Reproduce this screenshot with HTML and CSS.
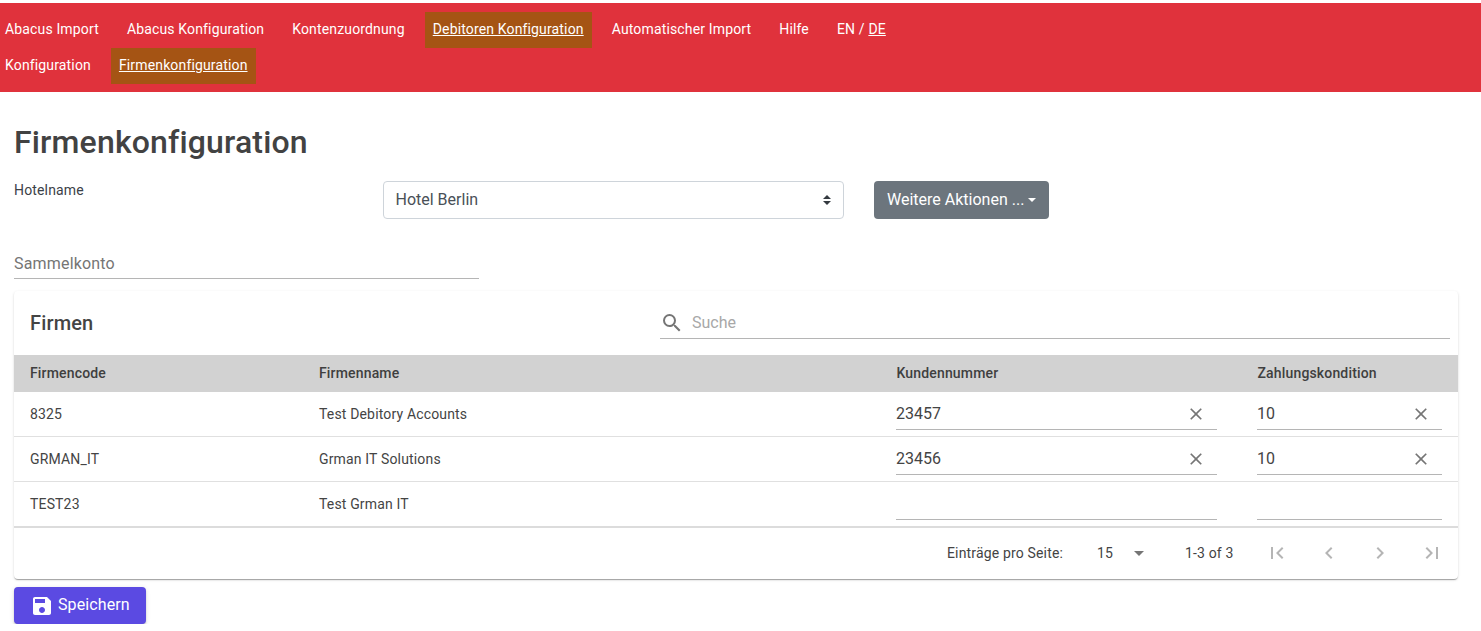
FILE: index.html
```html
<!DOCTYPE html>
<html lang="de">
<head>
<meta charset="utf-8">
<title>Firmenkonfiguration</title>
<link rel="stylesheet" href="styles.css">
</head>
<body>
<nav class="nav">
  <div class="nav-row">
    <a class="nav-link">Abacus Import</a>
    <a class="nav-link">Abacus Konfiguration</a>
    <a class="nav-link">Kontenzuordnung</a>
    <a class="nav-link active">Debitoren Konfiguration</a>
    <a class="nav-link">Automatischer Import</a>
    <a class="nav-link">Hilfe</a>
    <span class="nav-link">EN / <u>DE</u></span>
  </div>
  <div class="nav-row">
    <a class="nav-link">Konfiguration</a>
    <a class="nav-link active">Firmenkonfiguration</a>
  </div>
</nav>
<main class="main">
  <h1 class="title">Firmenkonfiguration</h1>
  <div class="form-row">
    <label class="form-label">Hotelname</label>
    <div class="select">
      <span>Hotel Berlin</span>
      <svg class="select-arrows" viewBox="0 0 8 10" width="8" height="10"><path d="M4 0 8 4H0zM4 10 0 6h8z"/></svg>
    </div>
    <button class="dropdown-btn"><span class="btn-text">Weitere Aktionen ...</span><i class="caret"></i></button>
  </div>
  <div class="account-field">Sammelkonto</div>
  <section class="card">
    <div class="card-head">
      <h2 class="card-title">Firmen</h2>
      <div class="search">
        <svg class="search-icon" viewBox="0 0 24 24" width="24" height="24"><path d="M15.5 14h-.79l-.28-.27A6.471 6.471 0 0 0 16 9.5 6.5 6.5 0 1 0 9.5 16c1.61 0 3.09-.59 4.23-1.57l.27.28v.79l5 4.99L20.49 19l-4.99-5zm-6 0C7.01 14 5 11.99 5 9.5S7.01 5 9.5 5 14 7.01 14 9.5 11.99 14 9.5 14z"/></svg>
        <span>Suche</span>
      </div>
    </div>
    <table class="table">
      <thead>
        <tr>
          <th class="col-code">Firmencode</th>
          <th class="col-name">Firmenname</th>
          <th class="col-customer">Kundennummer</th>
          <th class="col-terms">Zahlungskondition</th>
        </tr>
      </thead>
      <tbody>
        <tr>
          <td>8325</td>
          <td>Test Debitory Accounts</td>
          <td><div class="cell-input wide"><span>23457</span><svg class="clear" viewBox="0 0 24 24" width="20" height="20"><path d="M19 6.41 17.59 5 12 10.59 6.41 5 5 6.41 10.59 12 5 17.59 6.41 19 12 13.41 17.59 19 19 17.59 13.41 12z"/></svg></div></td>
          <td><div class="cell-input narrow"><span>10</span><svg class="clear" viewBox="0 0 24 24" width="20" height="20"><path d="M19 6.41 17.59 5 12 10.59 6.41 5 5 6.41 10.59 12 5 17.59 6.41 19 12 13.41 17.59 19 19 17.59 13.41 12z"/></svg></div></td>
        </tr>
        <tr>
          <td>GRMAN_IT</td>
          <td>Grman IT Solutions</td>
          <td><div class="cell-input wide"><span>23456</span><svg class="clear" viewBox="0 0 24 24" width="20" height="20"><path d="M19 6.41 17.59 5 12 10.59 6.41 5 5 6.41 10.59 12 5 17.59 6.41 19 12 13.41 17.59 19 19 17.59 13.41 12z"/></svg></div></td>
          <td><div class="cell-input narrow"><span>10</span><svg class="clear" viewBox="0 0 24 24" width="20" height="20"><path d="M19 6.41 17.59 5 12 10.59 6.41 5 5 6.41 10.59 12 5 17.59 6.41 19 12 13.41 17.59 19 19 17.59 13.41 12z"/></svg></div></td>
        </tr>
        <tr class="last-row">
          <td>TEST23</td>
          <td>Test Grman IT</td>
          <td><div class="cell-input wide"></div></td>
          <td><div class="cell-input narrow"></div></td>
        </tr>
      </tbody>
    </table>
    <div class="paginator">
      <span class="page-label">Einträge pro Seite:</span>
      <span class="page-size">15</span>
      <svg class="page-drop" viewBox="0 0 10 5" width="10" height="5"><path d="M0 0l5 5 5-5z"/></svg>
      <span class="page-range">1-3 of 3</span>
      <div class="page-icons">
        <svg viewBox="0 0 24 24" width="24" height="24"><path d="M18.41 16.59 13.82 12l4.59-4.59L17 6l-6 6 6 6zM6 6h2v12H6z"/></svg>
        <svg viewBox="0 0 24 24" width="24" height="24"><path d="M15.41 7.41 14 6l-6 6 6 6 1.41-1.41L10.83 12z"/></svg>
        <svg viewBox="0 0 24 24" width="24" height="24"><path d="M10 6 8.59 7.41 13.17 12l-4.58 4.59L10 18l6-6z"/></svg>
        <svg viewBox="0 0 24 24" width="24" height="24"><path d="M5.59 7.41 10.18 12l-4.59 4.59L7 18l6-6-6-6zM16 6h2v12h-2z"/></svg>
      </div>
    </div>
  </section>
  <button class="save-btn">
    <svg viewBox="0 0 24 24" width="24" height="24"><path d="M17 3H5c-1.11 0-2 .9-2 2v14c0 1.1.89 2 2 2h14c1.1 0 2-.9 2-2V7l-4-4zm-5 16c-1.66 0-3-1.34-3-3s1.34-3 3-3 3 1.34 3 3-1.34 3-3 3zm3-10H5V5h10v4z"/></svg>
    <span class="btn-text">Speichern</span>
  </button>
</main>
</body>
</html>
```
FILE: styles.css
```css
* { box-sizing: border-box; }
html, body { margin: 0; padding: 0; }
body {
  font-family: Roboto, "Liberation Sans", sans-serif;
  font-size: 14px;
  letter-spacing: .16px;
  color: #444;
  background: #fff;
  overflow: hidden;
  padding-top: 3px;
}
.nav {
  background: #e0323c;
  height: 89px;
  padding-top: 9px;
  overflow: hidden;
}
.nav-row {
  display: flex;
  gap: 12px;
  margin-left: -3px;
  height: 36px;
}
.nav-link {
  display: flex;
  align-items: center;
  white-space: pre;
  padding: 0 8px 2px;
  color: #fff;
  font-size: 14px;
  letter-spacing: .15px;
}
.nav-link.active {
  background: #a55414;
  text-decoration: underline;
}
.main { padding: 0 23px 0 14px; }
.title {
  margin: 0;
  padding-top: 30px;
  height: 89px;
  font-size: 32px;
  line-height: 40px;
  font-weight: 500;
  color: #424242;
}
.form-row {
  display: flex;
  align-items: flex-start;
}
.form-label {
  width: 369px;
  line-height: 18px;
  color: #3b4148;
}
.select {
  width: 461px;
  height: 38px;
  padding: 0 12px 2px 11.5px;
  display: flex;
  align-items: center;
  justify-content: space-between;
  border: 1px solid #ced4da;
  border-radius: 4px;
  font-size: 16px;
  letter-spacing: 0;
  color: #495057;
}
.select-arrows { fill: #343a40; margin-top: 2px; }
.dropdown-btn {
  margin-left: 30px;
  width: 175px;
  height: 38px;
  padding: 0 0 0 13px;
  display: flex;
  align-items: center;
  border: 0;
  border-radius: 4px;
  background: #6c757d;
  color: #fff;
  font: 16px Roboto, sans-serif;
}
.btn-text { padding-bottom: 2px; }
.caret {
  margin-left: 4px;
  border-top: 4px solid #fff;
  border-left: 4px solid transparent;
  border-right: 4px solid transparent;
}
.account-field {
  width: 465px;
  margin-top: 26px;
  height: 34px;
  line-height: 38px;
  font-size: 16px;
  letter-spacing: .18px;
  color: #757575;
  border-bottom: 1px solid #b5b5b5;
}
.card {
  margin-top: 12px;
  width: 1444px;
  height: 288px;
  border-radius: 4px;
  background: #fff;
  box-shadow: 0 2px 1px -1px rgba(0,0,0,.2), 0 1px 1px 0 rgba(0,0,0,.14), 0 1px 3px 0 rgba(0,0,0,.12);
}
.card-head {
  height: 64px;
  display: flex;
  padding: 0 8px 0 16px;
}
.card-title {
  width: 630px;
  margin: 0;
  padding-top: 19px;
  font-size: 20px;
  line-height: 26px;
  font-weight: 500;
}
.search {
  flex: 1;
  height: 48px;
  padding: 20px 0 0 0;
  display: flex;
  align-items: flex-start;
  gap: 8px;
  font-size: 16px;
  letter-spacing: 0;
  line-height: 24px;
  color: #a8a8a8;
  border-bottom: 1px solid #b5b5b5;
}
.search-icon { fill: #757575; flex: none; }
.table {
  width: 100%;
  border-collapse: collapse;
  table-layout: fixed;
}
.table th {
  height: 37px;
  padding: 0 0 2px;
  text-align: left;
  font-size: 14px;
  font-weight: 500;
  background: #d2d2d2;
  color: #3f3f3f;
}
.table th:first-child, .table td:first-child { padding-left: 16px; }
.col-code { width: 305px; }
.col-name { width: 577px; }
.col-customer { width: 361px; }
.table th.col-customer, .table th.col-terms { padding-left: .5px; }
.table td {
  height: 45px;
  padding: 0;
  border-top: 1px solid #e0e0e0;
  color: #444;
}
.table tbody tr:first-child td { border-top: 0; height: 44px; }
.table .last-row td {
  height: 46px;
  padding-top: 1px;
  border-bottom: 2px solid #dcdcdc;
}
.cell-input {
  height: 33px;
  margin-bottom: 1px;
  padding: 2px 11px 0 0;
  display: flex;
  align-items: center;
  justify-content: space-between;
  font-size: 16px;
  letter-spacing: 0;
  color: #444;
  border-bottom: 1px solid #b5b5b5;
}
.cell-input.wide { width: 321px; }
.cell-input.narrow { width: 185px; }
.clear { fill: #757575; flex: none; margin-top: 1px; }
.paginator {
  height: 52px;
  display: flex;
  align-items: center;
  font-size: 14px;
  color: #444;
  padding: 2px 0 0 933px;
  margin-top: -2px;
}
.page-label { width: 150px; white-space: nowrap; }
.page-size { width: 37px; }
.page-drop { fill: #757575; flex: none; }
.page-range { margin-left: 41px; width: 48px; white-space: nowrap; }
.page-icons {
  display: flex;
  gap: 27.7px;
  margin-left: 32px;
  fill: #b5b5b5;
}
.save-btn {
  margin-top: 8px;
  width: 132px;
  height: 37px;
  padding: 0 0 0 16px;
  display: flex;
  align-items: center;
  gap: 4px;
  border: 0;
  border-radius: 4px;
  background: #5b4ae2;
  color: #fff;
  font: 16px Roboto, sans-serif;
  letter-spacing: .1px;
  box-shadow: 0 3px 1px -2px rgba(0,0,0,.2), 0 2px 2px 0 rgba(0,0,0,.14), 0 1px 5px 0 rgba(0,0,0,.12);
}
.save-btn svg { fill: #fff; flex: none; }
```
